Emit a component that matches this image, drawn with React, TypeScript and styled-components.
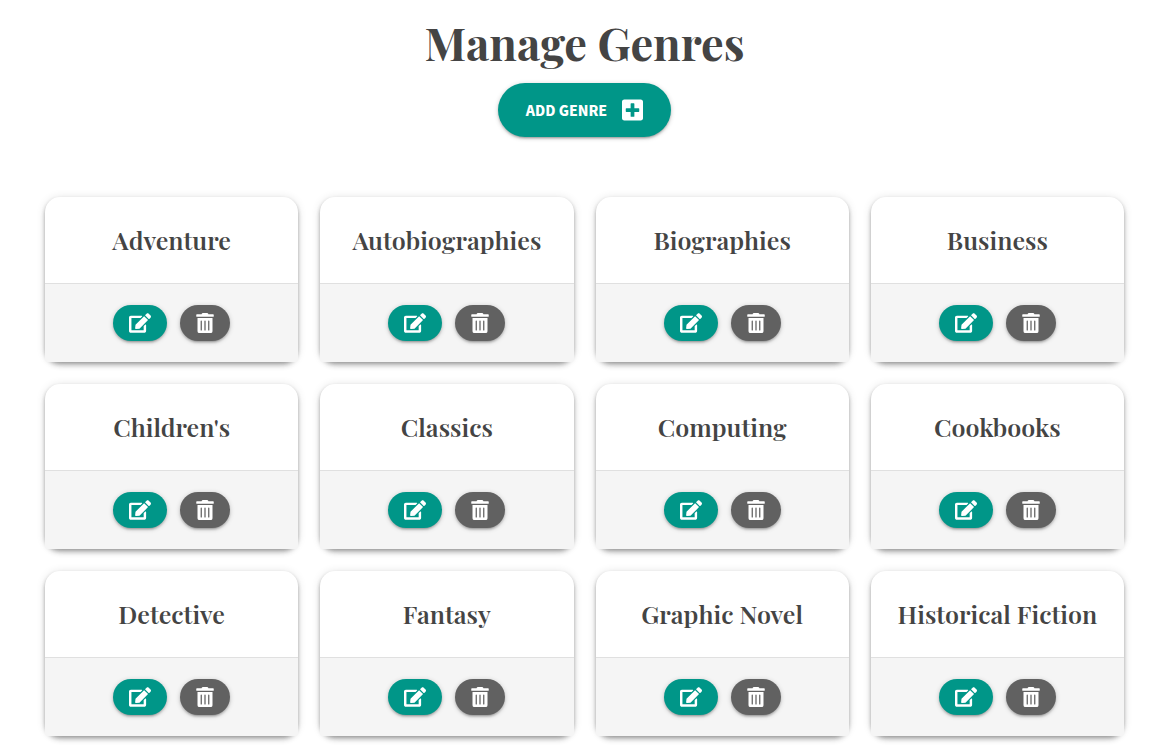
import React from "react";
import styled, { createGlobalStyle } from "styled-components";
import { FaEdit, FaPlusSquare, FaTrashAlt } from "react-icons/fa";

const GlobalStyle = createGlobalStyle`
  *, *::before, *::after { box-sizing: border-box; }
  body {
    margin: 0;
    background: #fff;
    color: #444;
    font-family: "Source Sans Pro", "Noto Sans CJK SC", sans-serif;
  }
`;

const Page = styled.main`
  padding: 18px 37px 16px 45px;
`;

const Header = styled.header`
  display: flex;
  flex-direction: column;
  align-items: center;
  margin-bottom: 60px;
`;

const Title = styled.h1`
  margin: 0 0 17px;
  font-family: "Playfair Display", "Liberation Serif", serif;
  font-size: 45px;
  line-height: 48px;
  font-weight: 700;
`;

const Button = styled.button<{ $tone?: "teal" | "grey"; $large?: boolean }>`
  display: inline-flex;
  align-items: center;
  justify-content: center;
  gap: 15px;
  height: ${(p) => (p.$large ? 54 : 36)}px;
  padding: 0 ${(p) => (p.$large ? 28 : 16)}px;
  border: 0;
  border-radius: 30px;
  background: ${(p) => (p.$tone === "grey" ? "#616161" : "#009688")};
  color: #fff;
  font-family: "Source Sans Pro", "Noto Sans CJK SC", sans-serif;
  font-size: 14px;
  font-weight: 900;
  text-transform: uppercase;
  white-space: nowrap;
  cursor: pointer;
  box-shadow:
    0 2px 2px 0 rgba(0, 0, 0, 0.14),
    0 3px 1px -2px rgba(0, 0, 0, 0.12),
    0 1px 5px 0 rgba(0, 0, 0, 0.2);
`;

const PlusIcon = styled(FaPlusSquare)`
  width: 21px;
  height: 24px;
`;

const EditIcon = styled(FaEdit)`
  width: 22px;
  height: 20px;
`;

const TrashIcon = styled(FaTrashAlt)`
  width: 18px;
  height: 20px;
`;

const Grid = styled.ul`
  display: grid;
  grid-template-columns: repeat(4, minmax(0, 1fr));
  gap: 22px;
  margin: 0;
  padding: 0;
  list-style: none;
`;

const Card = styled.li`
  border-radius: 15px;
  background: #fff;
  box-shadow:
    0 4px 5px 0 rgba(0, 0, 0, 0.14),
    0 1px 10px 0 rgba(0, 0, 0, 0.12),
    0 2px 4px -1px rgba(0, 0, 0, 0.3);
`;

const CardTitle = styled.h2`
  margin: 0;
  padding: 25px 8px;
  font-family: "Playfair Display", "Liberation Serif", serif;
  font-size: 25px;
  line-height: 36px;
  font-weight: 600;
  text-align: center;
  white-space: nowrap;
`;

const CardActions = styled.div`
  display: flex;
  justify-content: center;
  gap: 13px;
  padding: 21px 8px;
  border-top: 1px solid #e0e0e0;
  border-radius: 0 0 2px 2px;
  background: #f5f5f5;
`;

const genres = [
  "Adventure",
  "Autobiographies",
  "Biographies",
  "Business",
  "Children's",
  "Classics",
  "Computing",
  "Cookbooks",
  "Detective",
  "Fantasy",
  "Graphic Novel",
  "Historical Fiction",
];

function GenreCard({ name }: { name: string }) {
  return (
    <Card>
      <CardTitle>{name}</CardTitle>
      <CardActions>
        <Button type="button" aria-label={`Edit ${name}`}>
          <EditIcon />
        </Button>
        <Button type="button" $tone="grey" aria-label={`Delete ${name}`}>
          <TrashIcon />
        </Button>
      </CardActions>
    </Card>
  );
}

export default function App() {
  return (
    <>
      <GlobalStyle />
      <Page>
        <Header>
          <Title>Manage Genres</Title>
          <Button type="button" $large>
            Add Genre
            <PlusIcon />
          </Button>
        </Header>
        <Grid>
          {genres.map((name) => (
            <GenreCard key={name} name={name} />
          ))}
        </Grid>
      </Page>
    </>
  );
}
